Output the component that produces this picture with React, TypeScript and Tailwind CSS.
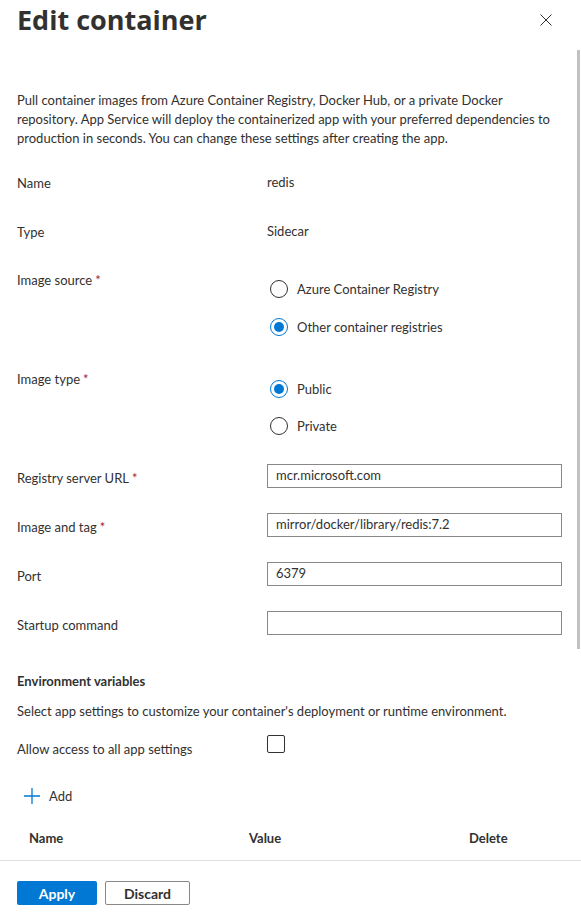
import React from "react";

const font = "font-['Lato','Open_Sans',sans-serif]";

function Req() {
  return <span className="ml-[3px] text-[#a4262c]">*</span>;
}

function Radio({ checked, label }: { checked?: boolean; label: string }) {
  return (
    <div className="flex h-[20px] items-center pl-[3px]">
      <span
        className={
          checked
            ? "flex h-[18px] w-[18px] items-center justify-center rounded-full border border-[#0078d4] bg-white"
            : "flex h-[18px] w-[18px] items-center justify-center rounded-full border border-[#323130] bg-white"
        }
      >
        {checked && <span className="h-[10px] w-[10px] rounded-full bg-[#0078d4]" />}
      </span>
      <span className="ml-[9px] text-[13px] leading-[19px] text-[#323130]">{label}</span>
    </div>
  );
}

function TextRow({ label, value, required }: { label: string; value: string; required?: boolean }) {
  return (
    <div className="flex items-start">
      <div className="w-[250px] pt-[5px] text-[13px] leading-[19px] text-[#323130]">
        {label}
        {required && <Req />}
      </div>
      <div className="flex h-[24px] flex-1 items-center border border-[#8a8886] bg-white px-[8px] text-[13px] text-[#323130]">
        {value}
      </div>
    </div>
  );
}

export default function App() {
  return (
    <div className={`${font} relative flex h-[921px] w-[581px] flex-col overflow-hidden bg-white text-[#323130]`}>
      {/* header */}
      <div className="flex items-start justify-between pl-[17px] pr-[29px] pt-[3px]">
        <h1 className="font-['Open_Sans',sans-serif] text-[27px] font-bold leading-[34px] text-[#323130]">
          Edit container
        </h1>
        <svg className="mt-[11px]" width="12" height="12" viewBox="0 0 12 12" fill="none">
          <path d="M0.5 0.5 L11.5 11.5 M11.5 0.5 L0.5 11.5" stroke="#323130" strokeWidth="1" />
        </svg>
      </div>

      {/* scrolling body */}
      <div className="relative flex-1">
        <div className="flex flex-col pl-[17px] pr-[19px]">
          <p className="mt-[54px] text-[13px] leading-[19px] text-[#323130]">
            Pull container images from Azure Container Registry, Docker Hub, or a private Docker
            <br />
            repository. App Service will deploy the containerized app with your preferred dependencies to
            <br />
            production in seconds. You can change these settings after creating the app.
          </p>

          {/* Name */}
          <div className="mt-[25px] flex h-[49px] items-start text-[13px] leading-[19px]">
            <div className="w-[250px] pt-[1px]">Name</div>
            <div>redis</div>
          </div>
          {/* Type */}
          <div className="flex h-[49px] items-start text-[13px] leading-[19px]">
            <div className="w-[250px] pt-[1px]">Type</div>
            <div>Sidecar</div>
          </div>

          {/* Image source */}
          <div className="flex items-start">
            <div className="w-[250px] text-[13px] leading-[19px]">
              Image source
              <Req />
            </div>
            <div className="flex flex-col gap-[18px] pt-[8px]">
              <Radio label="Azure Container Registry" />
              <Radio checked label="Other container registries" />
            </div>
          </div>

          {/* Image type */}
          <div className="mt-[33px] flex items-start">
            <div className="w-[250px] text-[13px] leading-[19px]">
              Image type
              <Req />
            </div>
            <div className="flex flex-col gap-[17px] pt-[9px]">
              <Radio checked label="Public" />
              <Radio label="Private" />
            </div>
          </div>

          <div className="mt-[28px] flex flex-col gap-[25px]">
            <TextRow label="Registry server URL" required value="mcr.microsoft.com" />
            <TextRow label="Image and tag" required value="mirror/docker/library/redis:7.2" />
            <TextRow label="Port" value="6379" />
            <TextRow label="Startup command" value="" />
          </div>

          <div className="mt-[37px] text-[13px] font-bold leading-[19px]">Environment variables</div>
          <div className="mt-[11px] text-[13px] leading-[19px]">
            Select app settings to customize your container&apos;s deployment or runtime environment.
          </div>

          <div className="mt-[13px] flex items-start">
            <div className="w-[250px] pt-[6px] text-[13px] leading-[19px]">Allow access to all app settings</div>
            <span className="mt-[1px] h-[18px] w-[18px] rounded-[2px] border border-[#323130] bg-white" />
          </div>

          <div className="mt-[27px] flex h-[20px] items-center pl-[7px]">
            <svg width="16" height="16" viewBox="0 0 16 16" fill="none">
              <path d="M8 0 V16 M0 8 H16" stroke="#0078d4" strokeWidth="1.3" />
            </svg>
            <span className="ml-[9px] text-[13px] leading-[19px]">Add</span>
          </div>

          <div className="mt-[23px] grid grid-cols-[220px_220px_1fr] text-[13px] font-bold leading-[19px]">
            <div className="pl-[12px]">Name</div>
            <div className="pl-[12px]">Value</div>
            <div className="pl-[12px]">Delete</div>
          </div>
        </div>

        {/* scrollbar thumb */}
        <div className="absolute right-[1px] top-[13px] h-[599px] w-[3px] bg-[#c1c1c1]" />
      </div>

      {/* footer */}
      <div className="flex h-[61px] gap-[8px] border-t border-[#e1dfdd] pl-[17px] pt-[20px]">
        <button className="h-[24px] w-[80px] rounded-[2px] bg-[#0078d4] text-[14px] font-bold text-white">
          Apply
        </button>
        <button className="h-[24px] w-[85px] rounded-[2px] border border-[#8a8886] bg-white text-[14px] font-bold text-[#323130]">
          Discard
        </button>
      </div>
    </div>
  );
}
